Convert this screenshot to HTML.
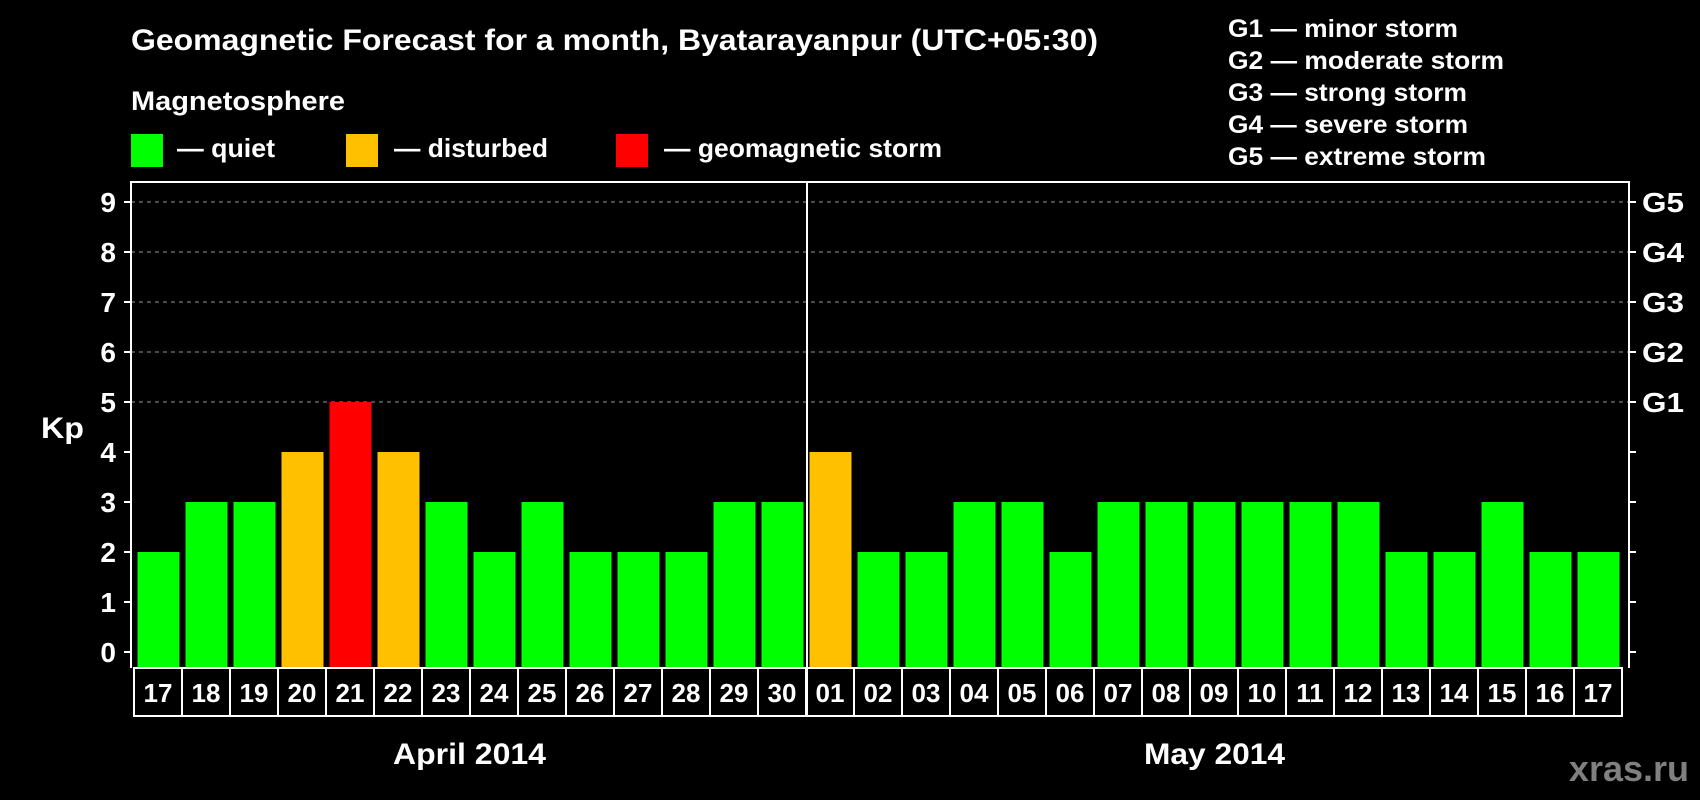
<!DOCTYPE html>
<html><head><meta charset="utf-8"><style>
html,body{margin:0;padding:0;background:#000;width:1700px;height:800px;overflow:hidden}
svg{display:block}
text{font-family:"Liberation Sans",Arial,sans-serif;font-weight:bold;fill:#fff}
</style></head><body>
<svg width="1700" height="800" viewBox="0 0 1700 800" xmlns="http://www.w3.org/2000/svg">
<rect width="1700" height="800" fill="#000"/>
<text x="131" y="50" font-size="30" textLength="967" lengthAdjust="spacingAndGlyphs">Geomagnetic Forecast for a month, Byatarayanpur (UTC+05:30)</text>
<text x="131" y="110" font-size="27" textLength="214" lengthAdjust="spacingAndGlyphs">Magnetosphere</text>
<rect x="131" y="134" width="32" height="33" fill="#00ff00"/>
<text x="177" y="157" font-size="26" textLength="98" lengthAdjust="spacingAndGlyphs">— quiet</text>
<rect x="346" y="134" width="32" height="33" fill="#ffc000"/>
<text x="394" y="157" font-size="26" textLength="154" lengthAdjust="spacingAndGlyphs">— disturbed</text>
<rect x="616" y="134" width="32" height="33" fill="#ff0000"/>
<text x="664" y="157" font-size="26" textLength="278" lengthAdjust="spacingAndGlyphs">— geomagnetic storm</text>
<g font-size="25">
<text x="1228" y="37" textLength="230" lengthAdjust="spacingAndGlyphs">G1 — minor storm</text>
<text x="1228" y="69" textLength="276" lengthAdjust="spacingAndGlyphs">G2 — moderate storm</text>
<text x="1228" y="101" textLength="239" lengthAdjust="spacingAndGlyphs">G3 — strong storm</text>
<text x="1228" y="133" textLength="240" lengthAdjust="spacingAndGlyphs">G4 — severe storm</text>
<text x="1228" y="165" textLength="258" lengthAdjust="spacingAndGlyphs">G5 — extreme storm</text>
</g>
<g stroke="#999" stroke-width="1" stroke-dasharray="4,4">
<line x1="131" y1="202" x2="1629" y2="202"/>
<line x1="131" y1="252" x2="1629" y2="252"/>
<line x1="131" y1="302" x2="1629" y2="302"/>
<line x1="131" y1="352" x2="1629" y2="352"/>
<line x1="131" y1="402" x2="1629" y2="402"/>
</g>
<g id="bars"></g>
<g stroke="#fff" stroke-width="2" fill="none">
<polyline points="131,668 131,182 1629,182 1629,668"/>
<line x1="807" y1="182" x2="807" y2="716"/>
</g>
<g id="ticks" stroke="#fff" stroke-width="2"></g>
<g id="labels"></g>
<text x="41" y="438" font-size="30" textLength="43" lengthAdjust="spacingAndGlyphs">Kp</text>
<text x="393" y="764" font-size="30" textLength="153" lengthAdjust="spacingAndGlyphs">April 2014</text>
<text x="1144" y="764" font-size="30" textLength="141" lengthAdjust="spacingAndGlyphs">May 2014</text>
<text x="1689" y="781" font-size="36" text-anchor="end" style="fill:#808080">xras.ru</text>
<script>
var ns="http://www.w3.org/2000/svg";
var days=["17","18","19","20","21","22","23","24","25","26","27","28","29","30","01","02","03","04","05","06","07","08","09","10","11","12","13","14","15","16","17"];
var vals=[2,3,3,4,5,4,3,2,3,2,2,2,3,3,4,2,2,3,3,2,3,3,3,3,3,3,2,2,3,2,2];
function el(t,a,p,txt){var e=document.createElementNS(ns,t);for(var k in a)e.setAttribute(k,a[k]);if(txt)e.textContent=txt;p.appendChild(e);return e;}
var bars=document.getElementById("bars"),labels=document.getElementById("labels"),ticks=document.getElementById("ticks");
var w=1488/31;
for(var i=0;i<31;i++){
 var bx=134+w*i,v=vals[i],y=652-50*v;
 var c=v>=5?"#ff0000":(v==4?"#ffc000":"#00ff00");
 el("rect",{x:bx+3.5,y:y,width:42,height:668-y,fill:c},bars);
 el("rect",{x:bx,y:668,width:w,height:48,fill:"none",stroke:"#fff","stroke-width":2},labels);
 el("text",{x:bx+w/2,y:702,"font-size":26,"text-anchor":"middle"},labels,days[i]);
}
for(var v=0;v<=9;v++){
 var y=652-50*v;
 el("line",{x1:124,y1:y,x2:131,y2:y},ticks);
 el("line",{x1:1629,y1:y,x2:1636,y2:y},ticks);
 el("text",{x:116,y:y+10,"font-size":28,"text-anchor":"end"},labels,String(v));
 if(v>=5) el("text",{x:1642,y:y+10,"font-size":28,textLength:42,lengthAdjust:"spacingAndGlyphs"},labels,"G"+(v-4));
}
</script>
</svg>
</body></html>
